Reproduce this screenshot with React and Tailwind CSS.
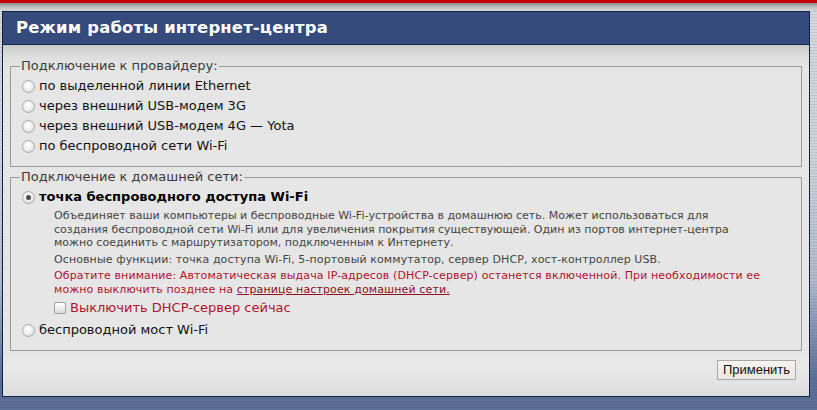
import React from "react";

const Radio = ({ checked }) => (
  <span className="w-[13px] h-[13px] rounded-full border border-[#a9a9a9] bg-[radial-gradient(circle_at_45%_40%,#ffffff_0%,#f0f0f0_45%,#cfcfcf_100%)] flex items-center justify-center shrink-0">
    {checked && <span className="w-[5px] h-[5px] rounded-full bg-[#4a4a4a]" />}
  </span>
);

const RadioRow = ({ checked, bold, children }) => (
  <div className="h-[20px] flex items-center">
    <span className="ml-[2px] mr-[4px]">
      <Radio checked={checked} />
    </span>
    <span className={bold ? "text-[13px] font-bold text-[#000]" : "text-[13px] text-[#111]"}>{children}</span>
  </div>
);

export default function App() {
  return (
    <div className="w-[817px] h-[410px] overflow-hidden flex flex-col font-['DejaVu_Sans',Verdana,sans-serif] bg-[repeating-linear-gradient(to_bottom,rgba(0,0,0,0)_0px,rgba(0,0,0,0)_2px,rgba(40,50,80,0.12)_2px,rgba(40,50,80,0.12)_3px),linear-gradient(to_bottom,#d8d9dd_0px,#cfd3dc_160px,#b3bbcc_280px,#7d8bab_340px,#5c6f97_380px,#5c6f97_410px)]">
      <div className="h-[3px] bg-[#c30000] shrink-0" />
      <div className="h-[8px] bg-[linear-gradient(to_bottom,#8e8e8e,#c4c4c4_60%,#d6d6d6)] shrink-0" />
      <div className="ml-[2px] w-[808px] h-[386px] border border-[#0b2347] flex flex-col shrink-0">
        <div className="h-[33px] bg-[#354b7c] border-b border-[#0b2347] flex items-center pl-[13px] shrink-0">
          <span className="text-white font-bold text-[16.4px] tracking-[0.2px]">Режим работы интернет-центра</span>
        </div>
        <div className="flex-1 bg-[linear-gradient(to_bottom,#c9c9c9_0px,#dedede_12px,#e5e5e5_24px,#e6e6e6_310px,#e9e9e9_320px,#dcdcdc_352px)] px-[7px] pt-[13px] flex flex-col">
          <fieldset className="border border-[#9a9a9a] pl-[9px] pr-[10px] pt-[2px] pb-[10px]">
            <legend className="px-[1px] text-[13px] leading-[16px] text-[#3a3a3a]">Подключение к провайдеру:</legend>
            <RadioRow>по выделенной линии Ethernet</RadioRow>
            <RadioRow>через внешний USB-модем 3G</RadioRow>
            <RadioRow>через внешний USB-модем 4G — Yota</RadioRow>
            <RadioRow>по беспроводной сети Wi-Fi</RadioRow>
          </fieldset>
          <fieldset className="mt-[2px] border border-[#9a9a9a] pl-[9px] pr-[10px] pt-[2px] pb-[10px]">
            <legend className="px-[1px] text-[13px] leading-[16px] text-[#3a3a3a]">Подключение к домашней сети:</legend>
            <RadioRow checked bold>точка беспроводного доступа Wi-Fi</RadioRow>
            <div className="pl-[34px] text-[11px] leading-[13.5px]">
              <p className="mt-[2px] text-[#444]">
                Объединяет ваши компьютеры и беспроводные Wi-Fi-устройства в домашнюю сеть. Может использоваться для
                <br />
                создания беспроводной сети Wi-Fi или для увеличения покрытия существующей. Один из портов интернет-центра
                <br />
                можно соединить с маршрутизатором, подключенным к Интернету.
              </p>
              <p className="mt-[3px] text-[#444] tracking-[0.1px]">
                Основные функции: точка доступа Wi-Fi, 5-портовый коммутатор, сервер DHCP, хост-контроллер USB.
              </p>
              <p className="mt-[3px] text-[#b0132c] tracking-[0.12px]">
                Обратите внимание: Автоматическая выдача IP-адресов (DHCP-сервер) останется включенной. При необходимости ее
                <br />
                можно выключить позднее на <span className="underline text-[#8e0f20]">странице настроек домашней сети.</span>
              </p>
              <div className="h-[20px] mt-[2px] flex items-center">
                <span className="w-[12px] h-[12px] rounded-[2px] border border-[#a0a0a0] bg-[linear-gradient(to_bottom,#ffffff,#dadada)] mr-[4px] shrink-0" />
                <span className="text-[13px] text-[#b0132c]">Выключить DHCP-сервер сейчас</span>
              </div>
            </div>
            <div className="mt-[2px]">
              <RadioRow>беспроводной мост Wi-Fi</RadioRow>
            </div>
          </fieldset>
          <div className="flex justify-end mt-[9px] pr-[6px]">
            <button className="h-[20px] w-[79px] border border-[#a8a8a8] bg-[linear-gradient(to_bottom,#f6f4f0,#ebe7e0)] font-['Liberation_Sans',Arial,sans-serif] text-[13px] text-[#111] flex items-center justify-center">
              Применить
            </button>
          </div>
        </div>
      </div>
    </div>
  );
}
